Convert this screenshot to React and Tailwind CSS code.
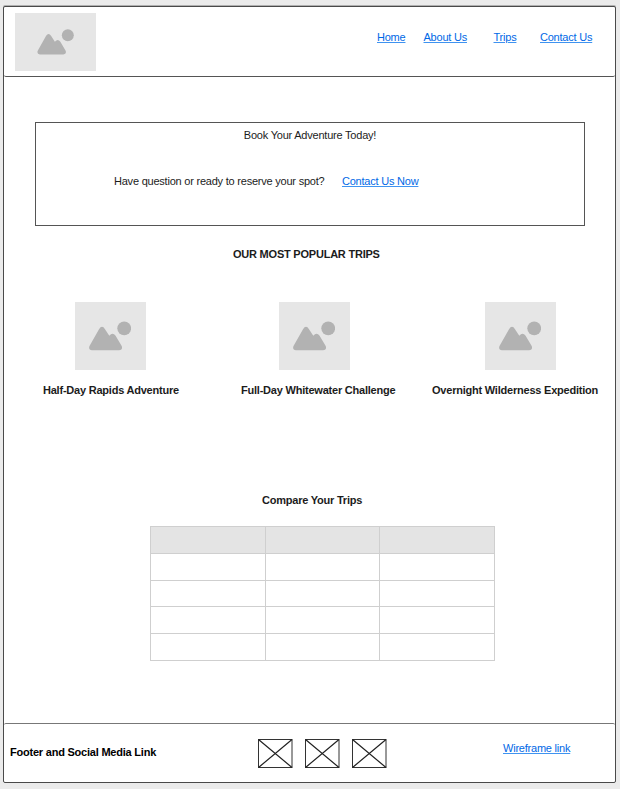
const LINK = "whitespace-nowrap text-[#0068e6] underline decoration-[#3f93f0] decoration-1 underline-offset-1";

function ImagePlaceholder({ className, iconClassName }) {
  return (
    <div className={`bg-[#e6e6e6] ${className}`}>
      <svg className={iconClassName} viewBox="0 0 42 30" fill="#b2b2b2">
        <circle cx="35.2" cy="7.3" r="6.9" />
        <path d="M.5 25 10 8.2Q13 3.4 16 8.2L20.3 14.7Q23.6 10.8 26.6 14.7L32.7 25Q34.1 29.2 30 29.3L3 29.3Q-.9 29 .5 25Z" />
      </svg>
    </div>
  );
}

function TripCard({ title, className, imageClassName }) {
  return (
    <div className={className}>
      <ImagePlaceholder className={`h-[68px] w-[70.5px] pt-[19px] pl-[14px] ${imageClassName}`} iconClassName="block h-[30px] w-[42px]" />
      <h3 className="mt-[12px] font-bold whitespace-nowrap">{title}</h3>
    </div>
  );
}

function CrossedBox() {
  return (
    <svg className="block h-[29px] w-[35px]" viewBox="0 0 35 29" fill="none" stroke="#333">
      <rect x=".5" y=".5" width="33.5" height="28" />
      <path d="m.5.5 33.5 28m0-28-33.5 28" stroke="#222" strokeWidth="1.2" />
    </svg>
  );
}

const cellKeys = ["a", "b", "c"];
const rowHeights = ["h-[27px]", "h-[27px]", "h-[26px]", "h-[27px]", "h-[27px]"];

export default function App() {
  return (
    <div className="h-[789px] w-[620px] overflow-hidden bg-[#ebebeb] pt-[6px] pl-[3px] font-['Liberation_Sans',Arial,sans-serif] text-[11px] leading-[16px] tracking-[-0.22px] text-[#1c1c1c]">
      <div className="flex h-[777px] w-[613px] flex-col rounded-[2px] border border-[#4a4a4a] bg-white shadow-[0_-1px_0_#b0b0b0]">
        <header className="flex h-[70px] shrink-0 rounded-b-[2px] border-b border-[#555]">
          <ImagePlaceholder className="mt-[6px] ml-[11px] h-[58px] w-[81px] pt-[16px] pl-[22px]" iconClassName="block h-[26px] w-[37px]" />
          <nav className="mt-[22px] ml-[281px] flex">
            <a className={`w-[46.5px] ${LINK}`}>Home</a>
            <a className={`w-[70px] ${LINK}`}>About Us</a>
            <a className={`w-[46.5px] ${LINK}`}>Trips</a>
            <a className={LINK}>Contact Us</a>
          </nav>
        </header>

        <main className="h-[646px] shrink-0">
          <section className="mt-[45px] ml-[31px] h-[104px] w-[550px] border border-[#555]">
            <h1 className="mt-[4px] text-center">Book Your Adventure Today!</h1>
            <div className="mt-[30px] ml-[78px] flex">
              <p className="w-[228px] whitespace-nowrap">Have question or ready to reserve your spot?</p>
              <a className={LINK}>Contact Us Now</a>
            </div>
          </section>

          <h2 className="mt-[20px] ml-[229px] font-bold">OUR MOST POPULAR TRIPS</h2>

          <section className="mt-[40px] ml-[39px] flex">
            <TripCard className="w-[198px]" imageClassName="ml-[32px]" title="Half-Day Rapids Adventure" />
            <TripCard className="w-[191px]" imageClassName="ml-[38px]" title="Full-Day Whitewater Challenge" />
            <TripCard className="w-[170px]" imageClassName="ml-[53px]" title="Overnight Wilderness Expedition" />
          </section>

          <h2 className="mt-[94px] ml-[258px] font-bold">Compare Your Trips</h2>
          <div className="mt-[18px] ml-[146px] w-[345px] border-t border-l border-[#cfcfcf]">
            {rowHeights.map((height, i) => (
              <div key={i} className={`grid grid-cols-[115px_114px_115px] ${height} ${i === 0 ? "bg-[#e4e4e4]" : ""}`}>
                {cellKeys.map((key) => (
                  <div key={key} className="border-r border-b border-[#cfcfcf]" />
                ))}
              </div>
            ))}
          </div>
        </main>

        <footer className="flex min-h-0 flex-1 rounded-t-[2px] border-t border-[#777]">
          <p className="mt-[20px] ml-[6px] w-[248px] font-bold text-black">Footer and Social Media Link</p>
          <div className="mt-[15px] flex w-[245px] gap-[12px]">
            <CrossedBox />
            <CrossedBox />
            <CrossedBox />
          </div>
          <a className={`mt-[16px] ${LINK}`}>Wireframe link</a>
        </footer>
      </div>
    </div>
  );
}
